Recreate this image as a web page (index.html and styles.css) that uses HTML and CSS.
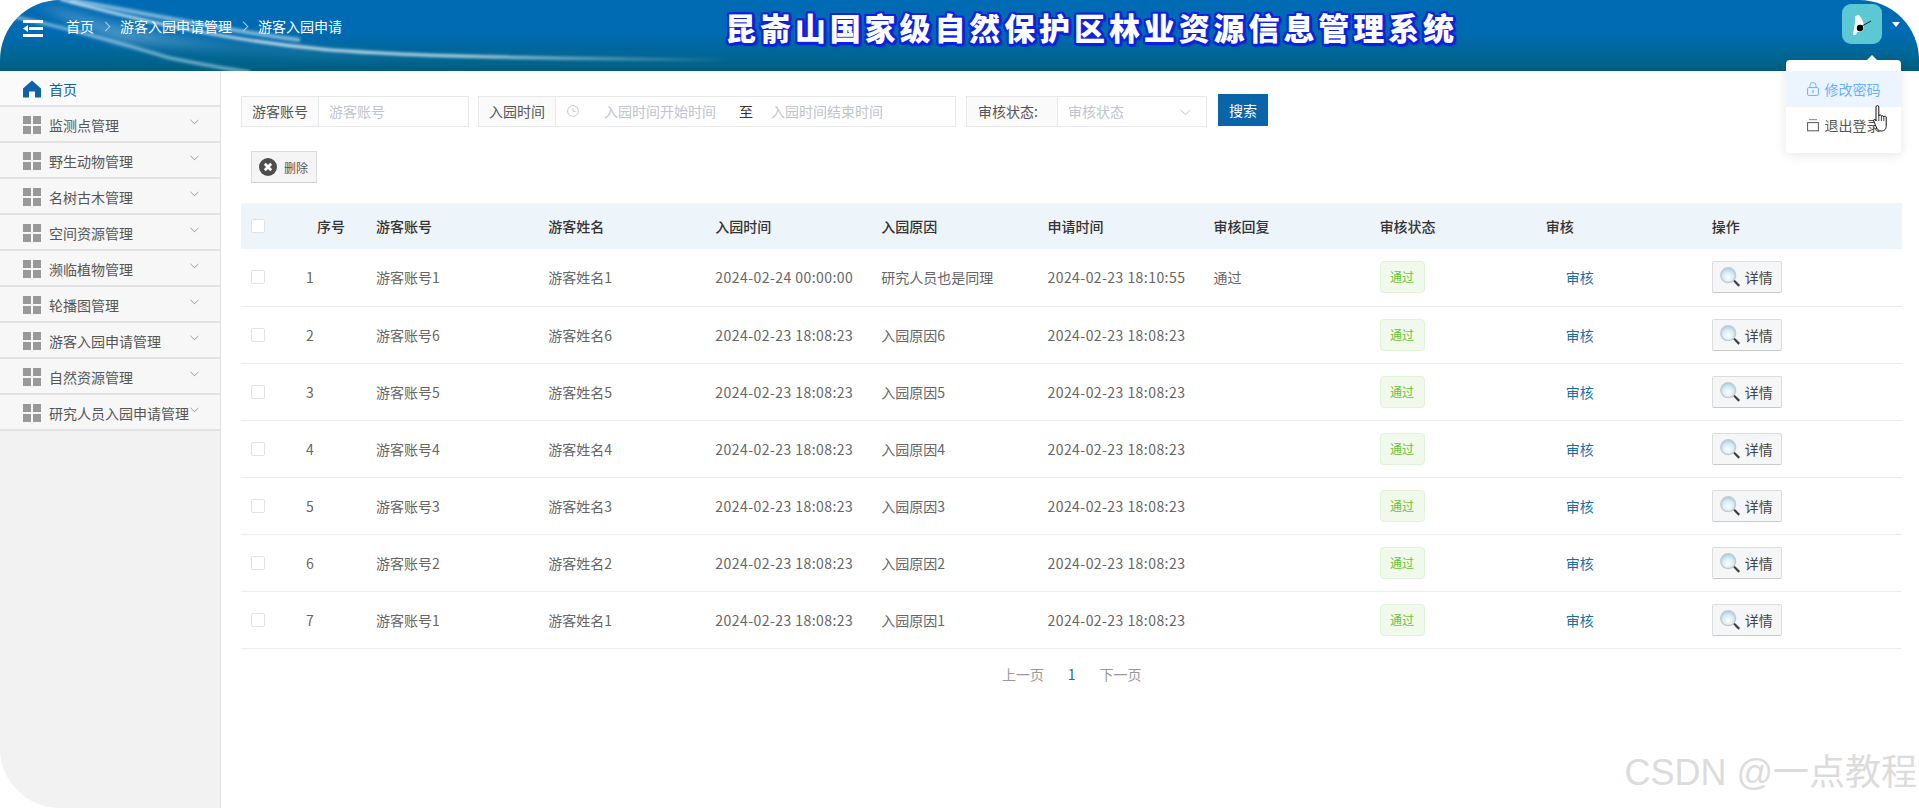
FILE: index.html
```html
<!DOCTYPE html>
<html lang="zh-CN">
<head>
  <meta charset="UTF-8" />
  <title>游客入园申请</title>
  <link rel="stylesheet" href="styles.css">
</head>
<body>
  <svg class="defs" width="0" height="0">
    <symbol id="i-grid" viewBox="0 0 18 18">
      <rect x="0" y="0" width="8" height="8"/><rect x="10" y="0" width="8" height="8"/>
      <rect x="0" y="10" width="8" height="8"/><rect x="10" y="10" width="8" height="8"/>
    </symbol>
    <symbol id="i-down" viewBox="0 0 10 6">
      <polyline points="0.5,0.5 5,5 9.5,0.5" fill="none" stroke="currentColor" stroke-width="0.8"/>
    </symbol>
    <symbol id="i-search" viewBox="0 0 20 20">
      <defs>
        <radialGradient id="glass" cx="50%" cy="65%" r="65%">
          <stop offset="0" stop-color="#ffffff"/>
          <stop offset="0.55" stop-color="#d8ecf8"/>
          <stop offset="1" stop-color="#a3cde6"/>
        </radialGradient>
      </defs>
      <path d="M13 14 L14.6 12.8 L20 18 L18.4 19.8 Z" fill="#3d3d3d"/>
      <circle cx="8.2" cy="8.2" r="7.4" fill="url(#glass)" stroke="#c6cacd" stroke-width="1.5"/>
    </symbol>
  </svg>

  <div class="app">
    <!-- 顶部 -->
    <header class="top">
      <svg class="swoosh" viewBox="0 0 1919 71" preserveAspectRatio="none">
        <defs>
          <filter id="b1"><feGaussianBlur stdDeviation="1.5"/></filter>
          <filter id="b2"><feGaussianBlur stdDeviation="6"/></filter>
          <linearGradient id="fade" x1="0" x2="1" y1="0" y2="0">
            <stop offset="0" stop-color="#fff" stop-opacity="0.85"/>
            <stop offset="0.6" stop-color="#fff" stop-opacity="0.9"/>
            <stop offset="1" stop-color="#fff" stop-opacity="0"/>
          </linearGradient>
        </defs>
        <path d="M30 0 C110 25 180 45 300 50 L420 60 L120 42 C70 24 50 10 30 0 Z" fill="#fff" opacity="0.3" filter="url(#b2)"/>
        <path d="M60 -1 C130 18 220 40 330 50 C440 58 560 58 730 60" fill="none" stroke="url(#fade)" stroke-width="2.5" filter="url(#b1)"/>
        <path d="M10 16 C60 26 130 46 170 58 C200 64 220 68 250 72" fill="none" stroke="#bfe2f5" stroke-opacity="0.65" stroke-width="3" filter="url(#b1)"/>
        <path d="M70 0 C140 12 220 30 300 40" fill="none" stroke="#d8effa" stroke-opacity="0.6" stroke-width="4" filter="url(#b1)"/>
      </svg>
      <div class="top-left">
        <svg class="fold" viewBox="0 0 20 17">
          <rect x="0" y="0" width="20" height="3" fill="#fff"/>
          <rect x="6" y="7" width="14" height="3" fill="#fff"/>
          <rect x="0" y="14" width="20" height="3" fill="#fff"/>
          <polygon points="0,8.5 5,5 5,12" fill="#fff"/>
        </svg>
        <nav class="crumbs">
          <span>首页</span><i class="sep"></i><span>游客入园申请管理</span><i class="sep"></i><span>游客入园申请</span>
        </nav>
      </div>
      <h1 class="sys-title">昆嵛山国家级自然保护区林业资源信息管理系统</h1>
      <div class="user">
        <div class="avatar">
          <svg viewBox="0 0 40 40" width="40" height="40">
            <path d="M13 12 L17 11 L20 15 L22 21 L21 27 L15 28 L14 31 L11 31 L12 24 L13 18 Z" fill="#fff"/>
            <circle cx="18" cy="24" r="3.2" fill="#000"/>
            <path d="M20 22 L29 17" stroke="#222" stroke-width="1"/>
          </svg>
        </div>
        <i class="caret"></i>
      </div>
    </header>

    <div class="main">
      <!-- 左侧菜单 -->
      <aside class="side">
        <a class="menu-item home">
          <svg class="m-icon" viewBox="0 0 18 17"><path d="M9 0 L18 8 V17 H12 V11 H6 V17 H0 V8 Z" fill="#0d62a8"/></svg>
          <span>首页</span>
        </a>
        <a class="menu-item"><svg class="m-icon grid"><use href="#i-grid"/></svg><span>监测点管理</span><svg class="arrow"><use href="#i-down"/></svg></a>
        <a class="menu-item"><svg class="m-icon grid"><use href="#i-grid"/></svg><span>野生动物管理</span><svg class="arrow"><use href="#i-down"/></svg></a>
        <a class="menu-item"><svg class="m-icon grid"><use href="#i-grid"/></svg><span>名树古木管理</span><svg class="arrow"><use href="#i-down"/></svg></a>
        <a class="menu-item"><svg class="m-icon grid"><use href="#i-grid"/></svg><span>空间资源管理</span><svg class="arrow"><use href="#i-down"/></svg></a>
        <a class="menu-item"><svg class="m-icon grid"><use href="#i-grid"/></svg><span>濒临植物管理</span><svg class="arrow"><use href="#i-down"/></svg></a>
        <a class="menu-item"><svg class="m-icon grid"><use href="#i-grid"/></svg><span>轮播图管理</span><svg class="arrow"><use href="#i-down"/></svg></a>
        <a class="menu-item"><svg class="m-icon grid"><use href="#i-grid"/></svg><span>游客入园申请管理</span><svg class="arrow"><use href="#i-down"/></svg></a>
        <a class="menu-item"><svg class="m-icon grid"><use href="#i-grid"/></svg><span>自然资源管理</span><svg class="arrow"><use href="#i-down"/></svg></a>
        <a class="menu-item"><svg class="m-icon grid"><use href="#i-grid"/></svg><span>研究人员入园申请管理</span><svg class="arrow"><use href="#i-down"/></svg></a>
      </aside>

      <!-- 内容 -->
      <section class="content">
        <div class="search-row">
          <div class="field w-account">
            <label class="f-label">游客账号</label>
            <input class="f-input" placeholder="游客账号">
          </div>
          <div class="field w-date">
            <label class="f-label">入园时间</label>
            <div class="date-box">
              <svg class="clock" viewBox="0 0 12 12"><circle cx="6" cy="6" r="5.4" fill="none" stroke="#c0c4cc" stroke-width="0.9"/><polyline points="6,3 6,6.4 8.4,6.4" fill="none" stroke="#c0c4cc" stroke-width="0.9"/></svg>
              <span class="ph start">入园时间开始时间</span>
              <span class="to">至</span>
              <span class="ph">入园时间结束时间</span>
            </div>
          </div>
          <div class="field w-status">
            <label class="f-label status-label">审核状态:</label>
            <div class="select-box">
              <span class="ph">审核状态</span>
              <svg class="sel-arrow"><use href="#i-down"/></svg>
            </div>
          </div>
          <button class="btn-search">搜索</button>
        </div>

        <div class="tool-row">
          <button class="btn-del">
            <svg viewBox="0 0 18 18" width="18" height="18"><circle cx="9" cy="9" r="9" fill="#4d4d4d"/><path d="M5.8 5.8 L12.2 12.2 M12.2 5.8 L5.8 12.2" stroke="#fff" stroke-width="2.8"/></svg>
            删除
          </button>
        </div>

        <table class="list">
          <colgroup>
            <col class="c-check"><col class="c-no"><col class="c-first"><col class="c-name">
            <col class="c-std"><col class="c-std"><col class="c-std"><col class="c-std">
            <col class="c-std"><col class="c-std"><col class="c-last">
          </colgroup>
          <thead>
            <tr>
              <th><i class="check"></i></th><th>序号</th><th>游客账号</th><th>游客姓名</th><th>入园时间</th><th>入园原因</th><th>申请时间</th><th>审核回复</th><th>审核状态</th><th>审核</th><th>操作</th>
            </tr>
          </thead>
          <tbody>
            <tr>
              <td><i class="check"></i></td><td class="no">1</td><td>游客账号1</td><td>游客姓名1</td><td class="time">2024-02-24 00:00:00</td><td>研究人员也是同理</td><td class="time">2024-02-23 18:10:55</td><td>通过</td>
              <td><span class="tag">通过</span></td><td><a class="audit">审核</a></td><td><button class="btn-info"><svg><use href="#i-search"/></svg>详情</button></td>
            </tr>
            <tr>
              <td><i class="check"></i></td><td class="no">2</td><td>游客账号6</td><td>游客姓名6</td><td class="time">2024-02-23 18:08:23</td><td>入园原因6</td><td class="time">2024-02-23 18:08:23</td><td></td>
              <td><span class="tag">通过</span></td><td><a class="audit">审核</a></td><td><button class="btn-info"><svg><use href="#i-search"/></svg>详情</button></td>
            </tr>
            <tr>
              <td><i class="check"></i></td><td class="no">3</td><td>游客账号5</td><td>游客姓名5</td><td class="time">2024-02-23 18:08:23</td><td>入园原因5</td><td class="time">2024-02-23 18:08:23</td><td></td>
              <td><span class="tag">通过</span></td><td><a class="audit">审核</a></td><td><button class="btn-info"><svg><use href="#i-search"/></svg>详情</button></td>
            </tr>
            <tr>
              <td><i class="check"></i></td><td class="no">4</td><td>游客账号4</td><td>游客姓名4</td><td class="time">2024-02-23 18:08:23</td><td>入园原因4</td><td class="time">2024-02-23 18:08:23</td><td></td>
              <td><span class="tag">通过</span></td><td><a class="audit">审核</a></td><td><button class="btn-info"><svg><use href="#i-search"/></svg>详情</button></td>
            </tr>
            <tr>
              <td><i class="check"></i></td><td class="no">5</td><td>游客账号3</td><td>游客姓名3</td><td class="time">2024-02-23 18:08:23</td><td>入园原因3</td><td class="time">2024-02-23 18:08:23</td><td></td>
              <td><span class="tag">通过</span></td><td><a class="audit">审核</a></td><td><button class="btn-info"><svg><use href="#i-search"/></svg>详情</button></td>
            </tr>
            <tr>
              <td><i class="check"></i></td><td class="no">6</td><td>游客账号2</td><td>游客姓名2</td><td class="time">2024-02-23 18:08:23</td><td>入园原因2</td><td class="time">2024-02-23 18:08:23</td><td></td>
              <td><span class="tag">通过</span></td><td><a class="audit">审核</a></td><td><button class="btn-info"><svg><use href="#i-search"/></svg>详情</button></td>
            </tr>
            <tr>
              <td><i class="check"></i></td><td class="no">7</td><td>游客账号1</td><td>游客姓名1</td><td class="time">2024-02-23 18:08:23</td><td>入园原因1</td><td class="time">2024-02-23 18:08:23</td><td></td>
              <td><span class="tag">通过</span></td><td><a class="audit">审核</a></td><td><button class="btn-info"><svg><use href="#i-search"/></svg>详情</button></td>
            </tr>
          </tbody>
        </table>

        <div class="pager">
          <span>上一页</span><span class="cur">1</span><span>下一页</span>
        </div>
      </section>
    </div>

    <!-- 用户下拉菜单 -->
    <div class="dropdown">
      <i class="pop-arrow"></i>
      <div class="drop-item on">
        <svg viewBox="0 0 12 14" width="12" height="14"><rect x="0.6" y="5.6" width="10.8" height="7.8" rx="1" fill="none" stroke="currentColor"/><path d="M3 5.6 V3.5 a3 3 0 0 1 6 0 V5.6" fill="none" stroke="currentColor"/><rect x="5.4" y="8" width="1.2" height="3" fill="currentColor"/></svg>
        修改密码
      </div>
      <div class="drop-item">
        <svg viewBox="0 0 12 14" width="12" height="14"><rect x="0.6" y="4.6" width="10.8" height="8.2" fill="none" stroke="currentColor"/><rect x="2" y="1" width="8" height="1.2" fill="#999"/></svg>
        退出登录
      </div>
    </div>
    <svg class="hand" viewBox="0 0 14 27" width="14" height="27">
      <path d="M3 2 a1.4 1.4 0 0 1 2.8 0 V11 a1.3 1.3 0 0 1 2.6 0.4 a1.3 1.3 0 0 1 2.4 0.6 a1.2 1.2 0 0 1 2.4 1 V20 C13.5 24 11.5 26 8.5 26 C5.5 26 4.5 24.5 3 21.5 L0.7 16 C0.2 14.5 1.8 13.6 2.8 15 L3 16 Z" fill="#fff" stroke="#111" stroke-width="1"/>
      <path d="M5.8 11 V16 M8.4 11.5 V16 M10.8 12 V16" stroke="#111" stroke-width="0.8" fill="none"/>
    </svg>

    <div class="mark">CSDN @一点教程</div>
  </div>
</body>
</html>
```

FILE: styles.css
```css
* {
  box-sizing: border-box;
}
html, body {
  margin: 0;
  padding: 0;
  height: 100%;
  overflow: hidden;
}
body {
  font-family: "Noto Sans CJK SC", "Liberation Sans", sans-serif;
  font-size: 14px;
  color: #666;
  background: #fff;
}
.defs {
  position: absolute;
}
.app {
  position: relative;
  width: 100%;
  height: 100vh;
  overflow: hidden;
  display: flex;
  flex-direction: column;
}

/* header */
.top {
  position: relative;
  height: 71px;
  flex: none;
  display: flex;
  align-items: flex-start;
  border-radius: 60px 60px 0 0;
  overflow: hidden;
  background: linear-gradient(180deg, #006bb4 0%, #006bb2 45%, #00658f 85%, #005c7c 100%);
}
.swoosh {
  position: absolute;
  left: 0;
  top: 0;
  width: 100%;
  height: 100%;
}
.top-left {
  position: relative;
  display: flex;
  align-items: flex-start;
  width: 725px;
  flex: none;
  padding: 20px 0 0 23px;
}
.fold {
  width: 20px;
  height: 17px;
  flex: none;
}
.crumbs {
  display: flex;
  align-items: center;
  margin: -2px 0 0 23px;
  color: #fff;
  font-size: 14px;
  line-height: 17px;
  white-space: nowrap;
}
.sep {
  width: 7px;
  height: 7px;
  border-top: 1px solid #a9cfe6;
  border-right: 1px solid #a9cfe6;
  transform: rotate(45deg);
  margin: 0 11px 0 8px;
}
.sys-title {
  position: relative;
  margin: 8px 0 0;
  font-size: 31px;
  line-height: 38px;
  font-weight: 900;
  letter-spacing: 3.9px;
  white-space: nowrap;
  color: #fff;
  text-shadow: 2px 2px 0 #0d22e0, -2px -2px 0 #0d22e0, 2px -2px 0 #0d22e0, -2px 2px 0 #0d22e0, 0 3px 0 #0d22e0, 3px 0 0 #0d22e0, -2px 0 0 #0d22e0, 0 -2px 0 #0d22e0, 3px 3px 2px #0a3fa8;
}
.user {
  position: absolute;
  right: 19px;
  top: 4px;
  display: flex;
  align-items: center;
}
.avatar {
  width: 40px;
  height: 40px;
  border-radius: 9px;
  background: #5bc8d3;
}
.caret {
  width: 0;
  height: 0;
  margin-left: 10px;
  border-left: 4px solid transparent;
  border-right: 4px solid transparent;
  border-top: 5px solid #fff;
}

/* layout */
.main {
  flex: 1;
  display: flex;
  min-height: 0;
}
.side {
  width: 221px;
  flex: none;
  background: #f2f2f2;
  border-right: 1px solid #e2e2e2;
  border-bottom-left-radius: 60px;
}
.menu-item {
  display: flex;
  align-items: center;
  position: relative;
  height: 36px;
  padding: 1px 0 0 23px;
  background: #f7f7f7;
  border-bottom: 2px solid #e3e3e3;
  color: #555;
  white-space: nowrap;
}
.menu-item span {
  margin-left: 8px;
}
.home {
  background: #fafafa;
  color: #0d62a8;
}
.m-icon {
  width: 18px;
  height: 18px;
  flex: none;
}
.grid {
  fill: #999;
}
.arrow {
  position: absolute;
  left: 190px;
  top: 12px;
  width: 9px;
  height: 6px;
  color: #777;
}

/* content */
.content {
  flex: 1;
  min-width: 0;
  padding: 23px 17px 0 20px;
}
.search-row {
  display: flex;
  align-items: flex-start;
  height: 32px;
}
.field {
  display: flex;
  height: 31px;
  margin-top: 2px;
  border: 1px solid #e8e8e8;
  flex: none;
}
.w-account {
  width: 228px;
}
.w-date {
  width: 478px;
  margin-left: 9px;
}
.w-status {
  width: 241px;
  margin-left: 10px;
}
.f-label {
  width: 77px;
  flex: none;
  background: #fafafa;
  border-right: 1px solid #e8e8e8;
  color: #555;
  line-height: 29px;
  text-align: center;
}
.status-label {
  width: 91px;
  padding-left: 11px;
  text-align: left;
}
.f-input {
  flex: 1;
  min-width: 0;
  border: 0;
  outline: 0;
  padding: 0 10px 2px;
  font: inherit;
  color: #666;
}
.f-input::placeholder,
.ph {
  color: #c0c4cc;
}
.date-box,
.select-box {
  flex: 1;
  display: flex;
  align-items: center;
  line-height: 26px;
  padding-bottom: 2px;
}
.date-box {
  padding-left: 11px;
}
.clock {
  width: 12px;
  height: 12px;
  flex: none;
}
.start {
  margin-left: 25px;
}
.to {
  margin: 0 18px 0 23px;
  color: #333;
}
.select-box {
  padding-left: 10px;
  position: relative;
}
.sel-arrow {
  position: absolute;
  right: 15px;
  top: 12px;
  width: 11px;
  height: 7px;
  color: #bbb;
}
.btn-search {
  height: 32px;
  width: 50px;
  margin-left: 11px;
  flex: none;
  border: 0;
  background: #0a64a8;
  color: #fff;
  font: inherit;
  padding: 0;
}
.tool-row {
  margin: 25px 0 20px 10px;
  height: 32px;
}
.btn-del {
  display: flex;
  align-items: center;
  gap: 7px;
  width: 66px;
  height: 32px;
  padding: 0 0 0 7px;
  border: 1px solid #dcdcdc;
  border-bottom-color: #cfcfcf;
  background: #f5f5f5;
  color: #555;
  font: inherit;
  font-size: 12px;
}

/* table */
.list {
  width: 1661px;
  table-layout: fixed;
  border-collapse: collapse;
}
.c-check { width: 64px; }
.c-no { width: 61px; }
.c-first { width: 172px; }
.c-name { width: 167px; }
.c-std { width: 166px; }
.c-last { width: 200px; }
.list th {
  height: 46px;
  padding: 0 0 0 10px;
  background: #eef5fa;
  color: #333;
  font-weight: 500;
  text-align: left;
}
.list th:nth-child(2) {
  padding-left: 12px;
}
.list td {
  height: 57px;
  padding: 0 0 0 10px;
  border-bottom: 1px solid #ececec;
  white-space: nowrap;
}
.list td.no {
  padding-left: 1px;
}
.time {
  letter-spacing: 0.45px;
}
.check {
  display: block;
  width: 14px;
  height: 14px;
  background: #fff;
  border: 1px solid #e2e2e2;
  border-radius: 2px;
}
.tag {
  display: block;
  width: 45px;
  height: 32px;
  line-height: 30px;
  text-align: center;
  font-size: 12px;
  color: #67c23a;
  background: #f0f9eb;
  border: 1px solid #e1f3d8;
  border-radius: 4px;
}
.audit {
  display: block;
  padding-left: 20px;
  color: #1a6ea8;
}
.btn-info {
  display: flex;
  align-items: center;
  width: 70px;
  height: 32px;
  padding: 0 0 0 7px;
  background: #f4f6f8;
  border: 1px solid #dcdcdc;
  border-bottom-color: #c9c9c9;
  border-radius: 2px;
  color: #444;
  font: inherit;
}
.btn-info svg {
  width: 20px;
  height: 20px;
  margin-right: 5px;
  flex: none;
}
.pager {
  display: flex;
  margin: 15px 0 0 761px;
  color: #999;
  line-height: 20px;
}
.cur {
  width: 55.5px;
  text-align: center;
  color: #1a6ea8;
}

/* dropdown + cursor, sit above page */
.dropdown {
  position: absolute;
  top: 60px;
  right: 18px;
  width: 115.5px;
  height: 93px;
  padding-top: 11px;
  background: #fff;
  border-radius: 4px;
  box-shadow: 0 2px 12px rgba(0, 0, 0, 0.1);
}
.pop-arrow {
  position: absolute;
  top: -5px;
  left: 81px;
  width: 0;
  height: 0;
  border-left: 5px solid transparent;
  border-right: 5px solid transparent;
  border-bottom: 5px solid #fff;
}
.drop-item {
  display: flex;
  align-items: center;
  gap: 6px;
  height: 36px;
  padding-left: 21px;
  color: #555;
}
.drop-item.on {
  background: #ecf5ff;
  color: #66b1ff;
}
.hand {
  position: absolute;
  left: 1873px;
  top: 105px;
}
.mark {
  position: absolute;
  right: 2px;
  top: 750px;
  font-family: "Liberation Sans", "Noto Sans CJK SC", sans-serif;
  font-size: 36px;
  line-height: 46px;
  color: #dcdcdc;
  white-space: nowrap;
}
```
